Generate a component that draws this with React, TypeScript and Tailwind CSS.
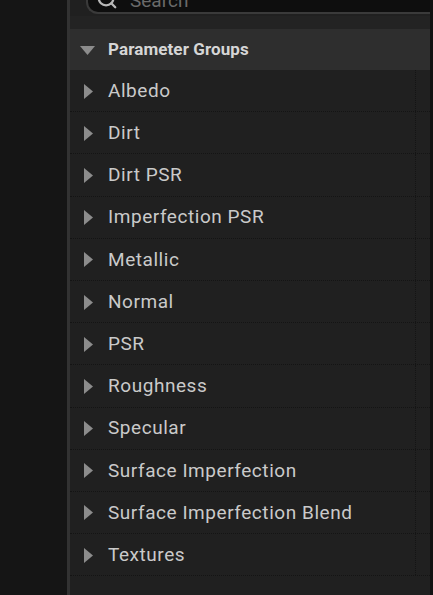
import { Search } from "lucide-react";

const GROUPS = [
  "Albedo",
  "Dirt",
  "Dirt PSR",
  "Imperfection PSR",
  "Metallic",
  "Normal",
  "PSR",
  "Roughness",
  "Specular",
  "Surface Imperfection",
  "Surface Imperfection Blend",
  "Textures",
];

function Caret({ open }: { open?: boolean }) {
  return open ? (
    <svg width="15" height="10" viewBox="0 0 15 10" className="shrink-0">
      <path d="M0 1 L15 1 L7.5 10 Z" fill="#8c8c8c" />
    </svg>
  ) : (
    <svg width="9" height="15" viewBox="0 0 9 15" className="shrink-0">
      <path d="M0 0 L9 7.5 L0 15 Z" fill="#8c8c8c" />
    </svg>
  );
}

export default function App() {
  return (
    <div
      className="flex h-[595px] w-[433px] overflow-hidden bg-[#121212]"
      style={{ fontFamily: "Roboto, 'Liberation Sans', sans-serif" }}
    >
      <div className="w-[67px] shrink-0 bg-[#151515]" />
      <div className="w-[3px] shrink-0 bg-[#323232]" />
      <div className="flex min-w-0 flex-1 flex-col bg-[#202020]">
        <div className="h-[16px] shrink-0 overflow-visible">
          <div className="-mt-[20px] ml-[16px] flex h-[34px] items-end gap-3 rounded-bl-[12px] border-b-2 border-l-2 border-[#3a3a3a] bg-[#0e0e0e] pb-[2px] pl-[8px]">
            <Search size={22} color="#b8b8b8" strokeWidth={2.5} />
            <span className="text-[19px] leading-none text-[#6a6a6a]">Search</span>
          </div>
        </div>
        <div className="h-[13px] shrink-0 bg-[#232323]" />
        <div className="flex h-[41px] shrink-0 items-center gap-[13px] bg-[#2e2e2e] pl-[10px]">
          <Caret open />
          <span className="text-[17px] font-bold tracking-[0.1px] text-[#d6d6d6]">
            Parameter Groups
          </span>
        </div>
        <div className="flex flex-col">
          {GROUPS.map((g) => (
            <div key={g} className="flex h-[42.2px] border-b border-dotted border-[#141414]">
              <div className="flex flex-1 items-center gap-[15px] pl-[14px] pt-[1px]">
                <Caret />
                <span className="text-[19px] tracking-[0.55px] text-[#cacaca]">{g}</span>
              </div>
              <div className="w-[15px] border-l border-dotted border-[#141414]" />
            </div>
          ))}
        </div>
      </div>
      <div className="w-[3px] shrink-0 bg-[#121212]" />
    </div>
  );
}
